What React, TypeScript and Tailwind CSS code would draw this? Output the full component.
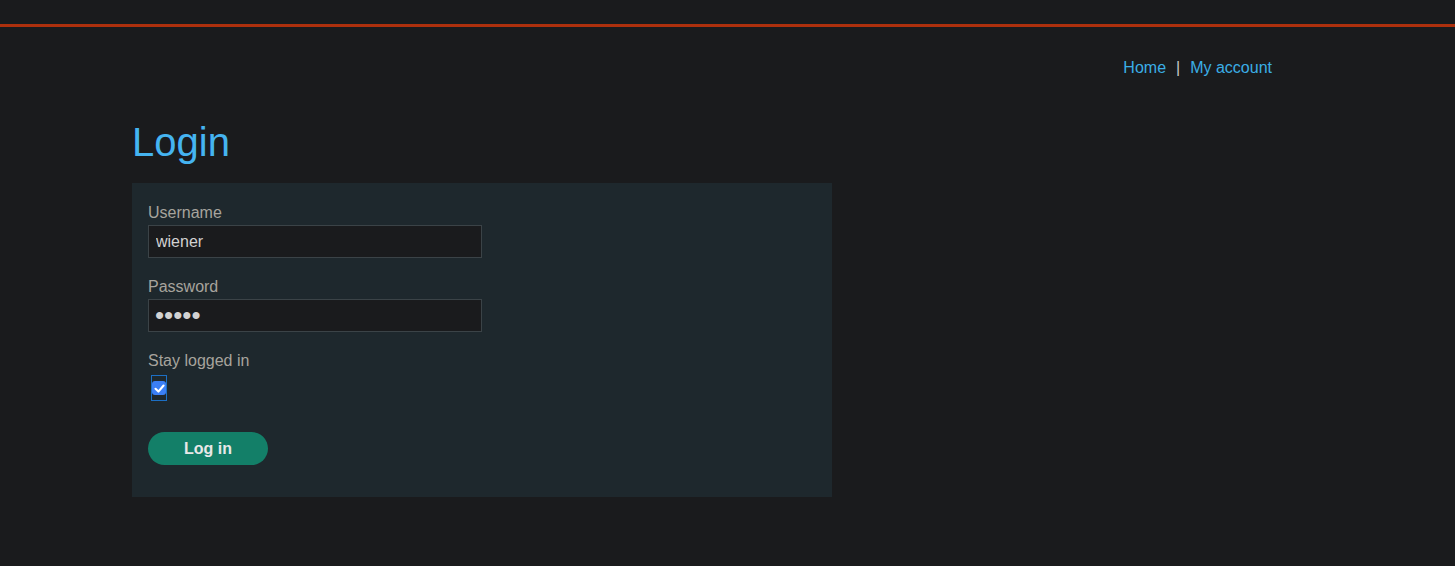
import React from "react";

const font = { fontFamily: '"Liberation Sans", Arial, sans-serif' };

function Field({ label, children }: { label: string; children: React.ReactNode }) {
  return (
    <div className="flex flex-col">
      <label className="text-[16px] leading-[24px] text-[#a7a49d]">{label}</label>
      {children}
    </div>
  );
}

export default function App() {
  return (
    <div style={font} className="min-h-[566px] bg-[#1a1b1d]">
      <div className="h-[24px]" />
      <div className="h-[3px] bg-[#ad300d]" />
      <div className="w-[1140px] ml-[132px]">
        <nav className="mt-[29px] flex justify-end gap-[10px] text-[16px] leading-[24px]">
          <a className="text-[#3aaee6]">Home</a>
          <span className="text-[#c8c8c8]">|</span>
          <a className="text-[#3aaee6]">My account</a>
        </nav>
        <h1 className="mt-[38px] text-[40px] leading-[48px] text-[#45b4f1]">Login</h1>
        <form className="mt-[17px] w-[700px] bg-[#1e282d] px-[16px] pt-[18px] pb-[32px]">
          <Field label="Username">
            <input
              readOnly
              value="wiener"
              className="w-[334px] h-[33px] bg-[#1a1b1d] border border-[#3b4347] px-[7px] text-[16px] text-[#d2d2d2] outline-none"
            />
          </Field>
          <div className="mt-[17px]">
            <Field label="Password">
              <input
                readOnly
                type="password"
                value="peter"
                className="w-[334px] h-[33px] bg-[#1a1b1d] border border-[#3b4347] px-[6px] text-[26px] text-[#d2d2d2] outline-none"
              />
            </Field>
          </div>
          <div className="mt-[17px]">
            <Field label="Stay logged in">
              <div className="mt-[2px] ml-[3px] w-[16px] h-[26px] border border-[#1c6fc4] flex items-center justify-center">
                <div className="w-[14px] h-[14px] rounded-[3px] bg-[#3b7ff5] flex items-center justify-center">
                  <svg width="11" height="11" viewBox="0 0 10 10">
                    <path d="M1.4 5.3 L4 7.8 L8.7 2.3" fill="none" stroke="#fff" strokeWidth="1.9" strokeLinecap="round" strokeLinejoin="round" />
                  </svg>
                </div>
              </div>
            </Field>
          </div>
          <button
            type="button"
            className="mt-[31px] w-[120px] h-[33px] rounded-full bg-[#137f68] text-[16px] font-bold text-[#e8e8e8]"
          >
            Log in
          </button>
        </form>
      </div>
    </div>
  );
}
